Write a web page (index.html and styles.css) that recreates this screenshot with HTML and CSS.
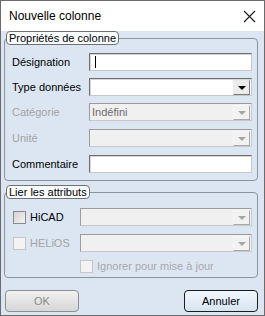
FILE: index.html
```html
<!DOCTYPE html>
<html>
<head>
  <meta charset="utf-8">
  <title>Nouvelle colonne</title>
  <link rel="stylesheet" href="styles.css">
</head>
<body>
<div class="dialog">
  <div class="dialog__title">
    <span class="dialog__caption">Nouvelle colonne</span>
    <svg class="dialog__close" width="13" height="13" viewBox="0 0 13 13">
      <path d="M1 1 L12 12 M12 1 L1 12" stroke="#1a1a1a" stroke-width="1.1" fill="none"/>
    </svg>
  </div>
  <div class="dialog__body">
    <fieldset class="group">
      <legend class="group__legend">Propriétés de colonne</legend>
      <div class="row">
        <span class="row__label">Désignation</span>
        <div class="field"><span class="field__caret"></span></div>
      </div>
      <div class="row">
        <span class="row__label">Type données</span>
        <div class="field field_combo">
          <span class="field__value"></span>
          <span class="combo__btn"><span class="combo__arrow"></span></span>
        </div>
      </div>
      <div class="row row_disabled row_wide">
        <span class="row__label">Catégorie</span>
        <div class="field field_combo field_disabled">
          <span class="field__value">Indéfini</span>
          <span class="combo__btn"><span class="combo__arrow"></span></span>
        </div>
      </div>
      <div class="row row_disabled row_wide">
        <span class="row__label">Unité</span>
        <div class="field field_combo field_disabled">
          <span class="field__value"></span>
          <span class="combo__btn"><span class="combo__arrow"></span></span>
        </div>
      </div>
      <div class="row">
        <span class="row__label">Commentaire</span>
        <div class="field"></div>
      </div>
    </fieldset>

    <fieldset class="group group_links">
      <legend class="group__legend">Lier les attributs</legend>
      <div class="row row_wide">
        <span class="check row__label row__label_short"><span class="check__box"></span>HiCAD</span>
        <div class="field field_combo field_disabled">
          <span class="field__value"></span>
          <span class="combo__btn"><span class="combo__arrow"></span></span>
        </div>
      </div>
      <div class="row row_disabled">
        <span class="check check_disabled row__label row__label_short"><span class="check__box"></span>HELiOS</span>
        <div class="field field_combo field_disabled">
          <span class="field__value"></span>
          <span class="combo__btn"><span class="combo__arrow"></span></span>
        </div>
      </div>
      <div class="row row_check">
        <span class="check check_disabled"><span class="check__box"></span>Ignorer pour mise à jour</span>
      </div>
    </fieldset>

    <div class="buttons">
      <button class="btn btn_disabled">OK</button>
      <button class="btn btn_default">Annuler</button>
    </div>
  </div>
</div>
</body>
</html>
```

FILE: styles.css
```css
body {
    margin: 0;
    font-family: "Liberation Sans", Arial, sans-serif;
    font-size: 11px;
    color: #000;
  }
.dialog {
    width: 265px;
    height: 316px;
    box-sizing: border-box;
    border: 1px solid #6b6b6b;
    background: #dce6f2;
  }
.dialog__title {
    height: 30px;
    display: flex;
    align-items: center;
    justify-content: space-between;
    padding: 0 8px 0 8px;
    background: #ffffff;
  }
.dialog__caption {
    font-size: 12px;
  }
.dialog__close {
    display: block;
    margin-top: 1px;
  }
.dialog__body {
    padding: 0 6px 0 3px;
  }
.group {
    margin: 0;
    padding: 8px 5px 7px 7px;
    border: 1px solid #8a949f;
    border-radius: 4px;
    min-width: 0;
  }
.group_links {
    margin-top: 4px;
    padding-top: 9px;
    padding-bottom: 4px;
  }
.group__legend {
    margin-left: -6px;
    padding: 0 2px;
    height: 12px;
    line-height: 12px;
    border: 1px solid #707070;
    border-radius: 4px;
    background: #fbfcfe;
  }
.row {
    display: flex;
    align-items: center;
    height: 18px;
    margin-bottom: 7px;
  }
/* lignes un peu plus espacees, comme dans l'original */
.row_wide {
    margin-bottom: 8px;
  }
.row:last-child {
    margin-bottom: 0;
  }
.row__label {
    width: 77px;
    flex-shrink: 0;
  }
.row__label_short {
    width: 67px;
    margin-left: 1px;
  }
.row_disabled .row__label {
    color: #a3a3a3;
  }
.row_check {
    height: 14px;
    padding-left: 68px;
  }
.field {
    flex-grow: 1;
    height: 18px;
    box-sizing: border-box;
    display: flex;
    align-items: center;
    background: #ffffff;
    border: 1px solid;
    border-color: #6f6f6f #c8c8c8 #c8c8c8 #6f6f6f;
    box-shadow: inset 1px 1px 0 #d6d6d6;
  }
.field__caret {
    width: 1px;
    height: 12px;
    margin-left: 5px;
    background: #000;
  }
.field__value {
    flex-grow: 1;
    padding-left: 2px;
  }
.field_disabled {
    background: #f0f0f0;
    border-color: #9c9c9c #c9c9c9 #c9c9c9 #9c9c9c;
    box-shadow: none;
  }
.field_disabled .field__value {
    color: #6d6d6d;
  }
.combo__btn {
    width: 17px;
    height: 15px;
    box-sizing: border-box;
    margin-right: 1px;
    display: flex;
    align-items: center;
    justify-content: center;
    background: #ececec;
    border: 1px solid;
    border-color: #e9e9e9 #7c7c7c #7c7c7c #e9e9e9;
  }
.combo__arrow {
    width: 0;
    height: 0;
    border-left: 4px solid transparent;
    border-right: 4px solid transparent;
    border-top: 4px solid #000;
    margin-top: 1px;
  }
.field_disabled .combo__btn {
    background: #f2f2f2;
    border-color: #f7f7f7 #a9a9a9 #a9a9a9 #f7f7f7;
  }
.field_disabled .combo__arrow {
    border-top-color: #a6a6a6;
  }
.check {
    display: flex;
    align-items: center;
  }
.check__box {
    width: 13px;
    height: 13px;
    box-sizing: border-box;
    margin-right: 4px;
    border: 1px solid #8a8a8a;
    background: linear-gradient(135deg, #d3d3d3, #f4f4f4);
  }
.check_disabled {
    color: #a9a9a9;
  }
.check_disabled .check__box {
    border-color: #c6c6c6;
    background: #f3f3f3;
  }
.buttons {
    display: flex;
    justify-content: space-between;
    margin-top: 12px;
    padding-left: 1px;
  }
.btn {
    width: 74px;
    height: 22px;
    padding: 0;
    font-family: inherit;
    font-size: 11px;
    border-radius: 4px;
    border: 1px solid #707070;
  }
.btn_disabled {
    color: #8d8d8d;
    border-color: #8f8f8f;
    background: linear-gradient(#f2f2f2, #e3e3e3 50%, #d7d7d7);
  }
.btn_default {
    color: #000;
    border-color: #1c1c1c;
    background: linear-gradient(#f0f6fc, #e5eef8 50%, #d6e3f1);
  }
```
